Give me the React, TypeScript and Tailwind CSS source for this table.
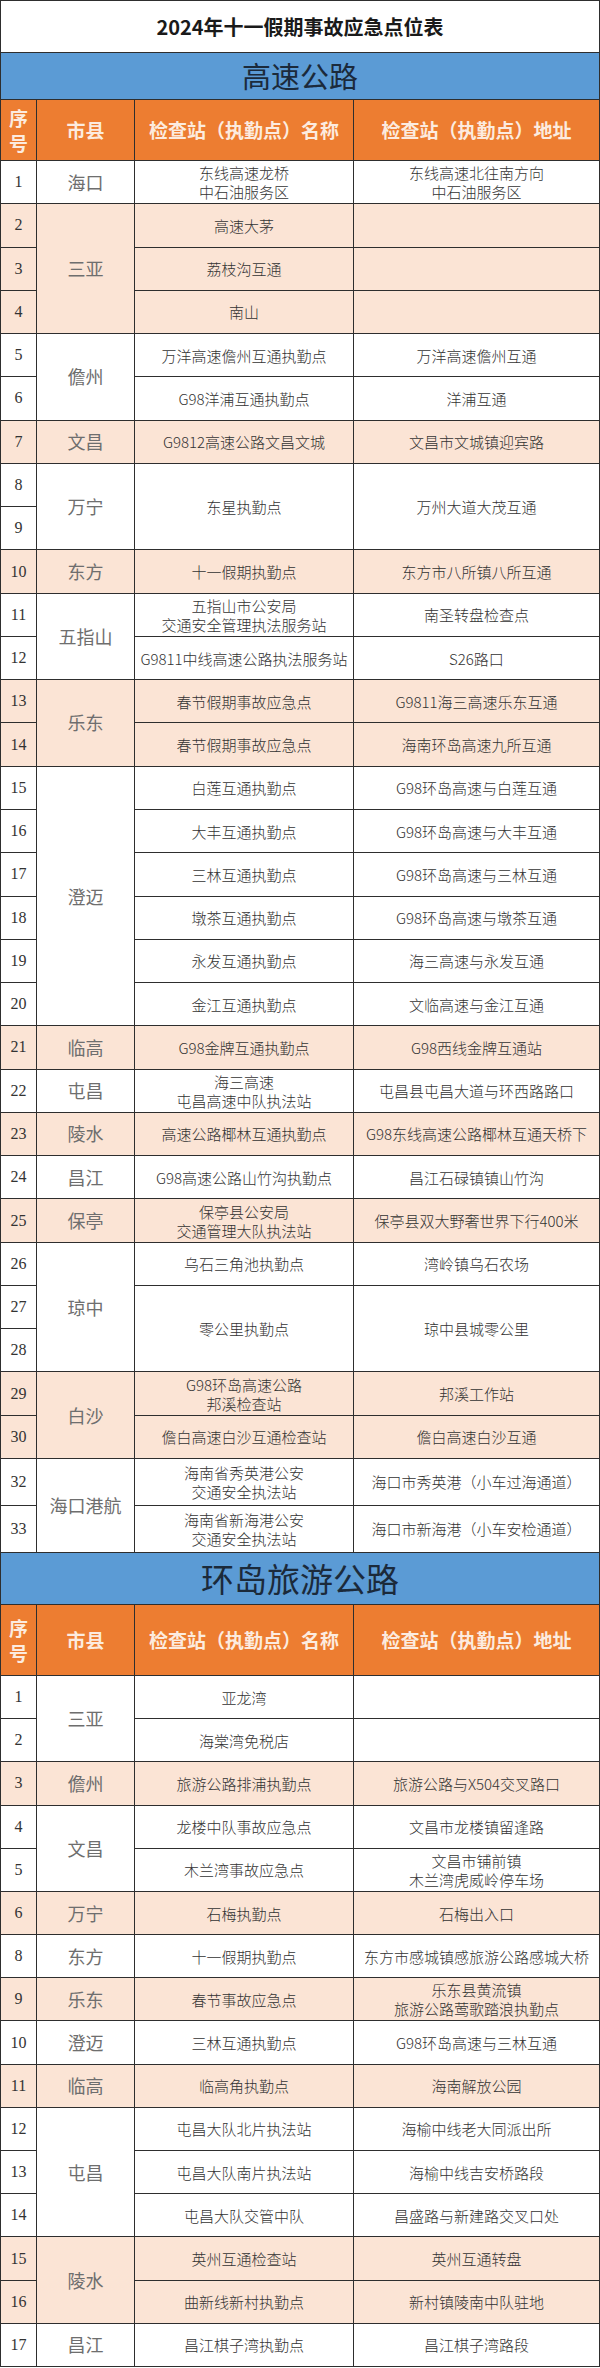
import React from "react"

type Row = { no: string; name?: string; addr?: string; span?: number }
type Group = { city: string; shade: boolean; rows: Row[] }

const highway: Group[] = [
  { city: "海口", shade: false, rows: [{ no: "1", name: "东线高速龙桥\n中石油服务区", addr: "东线高速北往南方向\n中石油服务区" }] },
  {
    city: "三亚",
    shade: true,
    rows: [
      { no: "2", name: "高速大茅", addr: "" },
      { no: "3", name: "荔枝沟互通", addr: "" },
      { no: "4", name: "南山", addr: "" },
    ],
  },
  {
    city: "儋州",
    shade: false,
    rows: [
      { no: "5", name: "万洋高速儋州互通执勤点", addr: "万洋高速儋州互通" },
      { no: "6", name: "G98洋浦互通执勤点", addr: "洋浦互通" },
    ],
  },
  { city: "文昌", shade: true, rows: [{ no: "7", name: "G9812高速公路文昌文城", addr: "文昌市文城镇迎宾路" }] },
  {
    city: "万宁",
    shade: false,
    rows: [{ no: "8", name: "东星执勤点", addr: "万州大道大茂互通", span: 2 }, { no: "9" }],
  },
  { city: "东方", shade: true, rows: [{ no: "10", name: "十一假期执勤点", addr: "东方市八所镇八所互通" }] },
  {
    city: "五指山",
    shade: false,
    rows: [
      { no: "11", name: "五指山市公安局\n交通安全管理执法服务站", addr: "南圣转盘检查点" },
      { no: "12", name: "G9811中线高速公路执法服务站", addr: "S26路口" },
    ],
  },
  {
    city: "乐东",
    shade: true,
    rows: [
      { no: "13", name: "春节假期事故应急点", addr: "G9811海三高速乐东互通" },
      { no: "14", name: "春节假期事故应急点", addr: "海南环岛高速九所互通" },
    ],
  },
  {
    city: "澄迈",
    shade: false,
    rows: [
      { no: "15", name: "白莲互通执勤点", addr: "G98环岛高速与白莲互通" },
      { no: "16", name: "大丰互通执勤点", addr: "G98环岛高速与大丰互通" },
      { no: "17", name: "三林互通执勤点", addr: "G98环岛高速与三林互通" },
      { no: "18", name: "墩茶互通执勤点", addr: "G98环岛高速与墩茶互通" },
      { no: "19", name: "永发互通执勤点", addr: "海三高速与永发互通" },
      { no: "20", name: "金江互通执勤点", addr: "文临高速与金江互通" },
    ],
  },
  { city: "临高", shade: true, rows: [{ no: "21", name: "G98金牌互通执勤点", addr: "G98西线金牌互通站" }] },
  { city: "屯昌", shade: false, rows: [{ no: "22", name: "海三高速\n屯昌高速中队执法站", addr: "屯昌县屯昌大道与环西路路口" }] },
  { city: "陵水", shade: true, rows: [{ no: "23", name: "高速公路椰林互通执勤点", addr: "G98东线高速公路椰林互通天桥下" }] },
  { city: "昌江", shade: false, rows: [{ no: "24", name: "G98高速公路山竹沟执勤点", addr: "昌江石碌镇镇山竹沟" }] },
  { city: "保亭", shade: true, rows: [{ no: "25", name: "保亭县公安局\n交通管理大队执法站", addr: "保亭县双大野奢世界下行400米" }] },
  {
    city: "琼中",
    shade: false,
    rows: [
      { no: "26", name: "乌石三角池执勤点", addr: "湾岭镇乌石农场" },
      { no: "27", name: "零公里执勤点", addr: "琼中县城零公里", span: 2 },
      { no: "28" },
    ],
  },
  {
    city: "白沙",
    shade: true,
    rows: [
      { no: "29", name: "G98环岛高速公路\n邦溪检查站", addr: "邦溪工作站" },
      { no: "30", name: "儋白高速白沙互通检查站", addr: "儋白高速白沙互通" },
    ],
  },
]

const portGroup: Group = {
  city: "海口港航",
  shade: false,
  rows: [
    { no: "32", name: "海南省秀英港公安\n交通安全执法站", addr: "海口市秀英港（小车过海通道）" },
    { no: "33", name: "海南省新海港公安\n交通安全执法站", addr: "海口市新海港（小车安检通道）" },
  ],
}

const tourism: Group[] = [
  {
    city: "三亚",
    shade: false,
    rows: [
      { no: "1", name: "亚龙湾", addr: "" },
      { no: "2", name: "海棠湾免税店", addr: "" },
    ],
  },
  { city: "儋州", shade: true, rows: [{ no: "3", name: "旅游公路排浦执勤点", addr: "旅游公路与X504交叉路口" }] },
  {
    city: "文昌",
    shade: false,
    rows: [
      { no: "4", name: "龙楼中队事故应急点", addr: "文昌市龙楼镇留逢路" },
      { no: "5", name: "木兰湾事故应急点", addr: "文昌市铺前镇\n木兰湾虎威岭停车场" },
    ],
  },
  { city: "万宁", shade: true, rows: [{ no: "6", name: "石梅执勤点", addr: "石梅出入口" }] },
  { city: "东方", shade: false, rows: [{ no: "8", name: "十一假期执勤点", addr: "东方市感城镇感旅游公路感城大桥" }] },
  { city: "乐东", shade: true, rows: [{ no: "9", name: "春节事故应急点", addr: "乐东县黄流镇\n旅游公路莺歌踏浪执勤点" }] },
  { city: "澄迈", shade: false, rows: [{ no: "10", name: "三林互通执勤点", addr: "G98环岛高速与三林互通" }] },
  { city: "临高", shade: true, rows: [{ no: "11", name: "临高角执勤点", addr: "海南解放公园" }] },
  {
    city: "屯昌",
    shade: false,
    rows: [
      { no: "12", name: "屯昌大队北片执法站", addr: "海榆中线老大同派出所" },
      { no: "13", name: "屯昌大队南片执法站", addr: "海榆中线吉安桥路段" },
      { no: "14", name: "屯昌大队交管中队", addr: "昌盛路与新建路交叉口处" },
    ],
  },
  {
    city: "陵水",
    shade: true,
    rows: [
      { no: "15", name: "英州互通检查站", addr: "英州互通转盘" },
      { no: "16", name: "曲新线新村执勤点", addr: "新村镇陵南中队驻地" },
    ],
  },
  { city: "昌江", shade: false, rows: [{ no: "17", name: "昌江棋子湾执勤点", addr: "昌江棋子湾路段" }] },
]

const cjk = "font-['Noto_Sans_CJK_SC',sans-serif]"
const cell = "border border-[#2e2e2e] p-0 text-center align-middle"

function GroupRows({ group, rowClass }: { group: Group; rowClass: string }) {
  const bg = group.shade ? "bg-[#fbe4d5]" : "bg-white"
  return (
    <>
      {group.rows.map((r, i) => (
        <tr key={r.no} className={`${rowClass} ${bg}`}>
          <td className={`${cell} font-['Liberation_Serif',serif] text-[16px] text-[#333]`}>{r.no}</td>
          {i === 0 && (
            <td rowSpan={group.rows.length} className={`${cell} ${cjk} text-[18px] text-[#6e6e6e]`}>
              {group.city}
            </td>
          )}
          {r.name !== undefined && (
            <td
              rowSpan={r.span ?? 1}
              className={`${cell} ${cjk} whitespace-pre-line text-[15px] font-light leading-[19px] text-[#333]`}
            >
              {r.name}
            </td>
          )}
          {r.name !== undefined && (
            <td
              rowSpan={r.span ?? 1}
              className={`${cell} ${cjk} whitespace-pre-line text-[15px] font-light leading-[19px] text-[#333]`}
            >
              {r.addr}
            </td>
          )}
        </tr>
      ))}
    </>
  )
}

function HeaderRow({ rowClass }: { rowClass: string }) {
  const th = `${cell} ${cjk} bg-[#ed7d31] font-bold text-[#fcebdf]`
  return (
    <tr className={rowClass}>
      <td className={`${th} text-[19px] leading-[25px]`}>
        序<br />号
      </td>
      <td className={`${th} text-[19px]`}>市县</td>
      <td className={`${th} text-[19px]`}>检查站（执勤点）名称</td>
      <td className={`${th} text-[19px]`}>检查站（执勤点）地址</td>
    </tr>
  )
}

export default function App() {
  return (
    <div className="w-[600px] bg-white">
      <table className="w-[600px] table-fixed border-collapse border border-[#2e2e2e]">
        <colgroup>
          <col className="w-[36px]" />
          <col className="w-[98px]" />
          <col className="w-[219px]" />
          <col />
        </colgroup>
        <tbody>
          <tr className="h-[52px]">
            <td colSpan={4} className={`${cell} ${cjk} bg-white text-[20px] font-bold text-[#1a1a1a]`}>
              2024年十一假期事故应急点位表
            </td>
          </tr>
          <tr className="h-[47px]">
            <td colSpan={4} className={`${cell} ${cjk} bg-[#5b9bd5] text-[29px] text-[#1b2a3b]`}>
              高速公路
            </td>
          </tr>
          <HeaderRow rowClass="h-[61px]" />
          {highway.map((g) => (
            <GroupRows key={g.city + g.rows[0].no} group={g} rowClass="h-[43.27px]" />
          ))}
          <GroupRows group={portGroup} rowClass="h-[47px]" />
          <tr className="h-[52px]">
            <td colSpan={4} className={`${cell} ${cjk} bg-[#5b9bd5] text-[33px] text-[#1b2a3b]`}>
              环岛旅游公路
            </td>
          </tr>
          <HeaderRow rowClass="h-[71px]" />
          {tourism.map((g) => (
            <GroupRows key={g.city + g.rows[0].no} group={g} rowClass="h-[43.2px]" />
          ))}
        </tbody>
      </table>
    </div>
  )
}
